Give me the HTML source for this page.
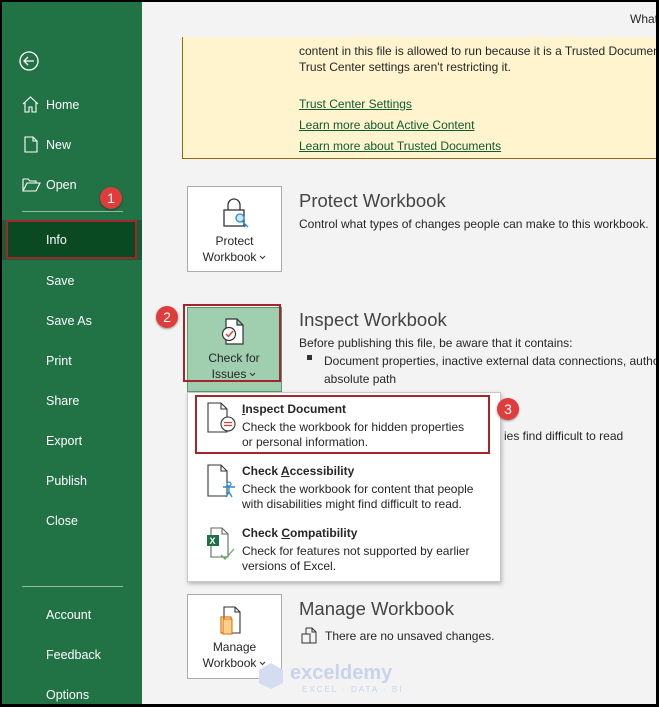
<!DOCTYPE html>
<html><head><style>
*{margin:0;padding:0;box-sizing:border-box}
body{width:659px;height:707px;background:#000;font-family:"Liberation Sans",sans-serif;position:relative;overflow:hidden}
.frame{position:absolute;left:2px;top:2px;width:654px;height:702px;background:#f3f3f3;overflow:hidden}
.side{position:absolute;left:0;top:0;width:140px;height:702px;background:#217346}
.t{position:absolute;font-size:12.5px;color:#fff;white-space:nowrap}
.a{position:absolute;white-space:nowrap;font-size:12px;color:#262626}
.h{position:absolute;font-size:18.5px;color:#444;white-space:nowrap}
.box{position:absolute;background:#fff;border:1px solid #ababab;text-align:center;font-size:12px;color:#262626;line-height:16px}
.lnk{color:#0e5c2f;text-decoration:underline}
.badge{position:absolute;width:22px;height:22px;border-radius:50%;background:#e03c3c;color:#fff;font-size:14px;text-align:center;line-height:22px;box-shadow:0 1px 2px rgba(0,0,0,.4)}
.cv{display:inline-block;width:7px;height:5px;margin-left:3px;vertical-align:middle}
</style></head><body>
<div class="frame">
<div class="side">
 <svg style="position:absolute;left:17px;top:49px" width="20" height="20" viewBox="0 0 20 20"><circle cx="10" cy="10" r="9" fill="none" stroke="#fff" stroke-width="1.3"/><path d="M15 10H5M9 6L5 10L9 14" fill="none" stroke="#fff" stroke-width="1.3"/></svg>
 <svg style="position:absolute;left:20px;top:94px" width="17" height="17" viewBox="0 0 17 17"><path d="M1 8L8.5 1L16 8M3 6V16H7V11H10V16H14V6" fill="none" stroke="#fff" stroke-width="1.1"/></svg>
 <div class="t" style="left:44px;top:96px">Home</div>
 <svg style="position:absolute;left:22px;top:134px" width="14" height="17" viewBox="0 0 14 17"><path d="M1 1H9L13 5V16H1Z M9 1V5H13" fill="none" stroke="#fff" stroke-width="1.1"/></svg>
 <div class="t" style="left:44px;top:136px">New</div>
 <svg style="position:absolute;left:20px;top:176px" width="19" height="14" viewBox="0 0 19 14"><path d="M1 1H6L8 3H14V5M1 1V13H14L18 5H5L1 13" fill="none" stroke="#fff" stroke-width="1.1"/></svg>
 <div class="t" style="left:44px;top:176px">Open</div>
 <div style="position:absolute;left:20px;top:209px;width:101px;height:1px;background:#8fbf9f"></div>
 <div style="position:absolute;left:0;top:218px;width:140px;height:40px;background:#185c37"></div>
 <div style="position:absolute;left:4px;top:218px;width:131px;height:39px;border:2px solid #a4262c;background:#0a4a22"></div>
 <div class="t" style="left:44px;top:231px">Info</div>
 <div class="t" style="left:44px;top:272px">Save</div>
 <div class="t" style="left:44px;top:312px">Save As</div>
 <div class="t" style="left:44px;top:352px">Print</div>
 <div class="t" style="left:44px;top:392px">Share</div>
 <div class="t" style="left:44px;top:432px">Export</div>
 <div class="t" style="left:44px;top:472px">Publish</div>
 <div class="t" style="left:44px;top:512px">Close</div>
 <div style="position:absolute;left:20px;top:584px;width:101px;height:1px;background:#8fbf9f"></div>
 <div class="t" style="left:44px;top:606px">Account</div>
 <div class="t" style="left:44px;top:646px">Feedback</div>
 <div class="t" style="left:44px;top:686px">Options</div>
</div>
<div class="badge" style="left:98px;top:185px">1</div>
<div class="a" style="left:628px;top:10px">What</div>
<div style="position:absolute;left:180px;top:35px;width:480px;height:122px;background:#fff4ce;border-left:1px solid #9a6a00;border-bottom:1px solid #9a6a00"></div>
<div class="a" style="left:297px;top:42px">content in this file is allowed to run because it is a Trusted Document</div>
<div class="a" style="left:297px;top:58px">Trust Center settings aren't restricting it.</div>
<div class="a lnk" style="left:297px;top:95px">Trust Center Settings</div>
<div class="a lnk" style="left:297px;top:116px">Learn more about Active Content</div>
<div class="a lnk" style="left:297px;top:137px">Learn more about Trusted Documents</div>

<div class="box" style="left:185px;top:184px;width:95px;height:86px;padding-top:46px">Protect<br>Workbook<svg class="cv" viewBox="0 0 7 5"><path d="M1 1l2.5 2.5L6 1" fill="none" stroke="#333"/></svg></div>
<svg style="position:absolute;left:221px;top:196px" width="30" height="34" viewBox="0 0 30 34"><path d="M5 12V7a6 6 0 0 1 12 0v5" fill="none" stroke="#333" stroke-width="1.3"/><rect x="1" y="12" width="20" height="16" fill="#fff" stroke="#333" stroke-width="1.3"/><circle cx="17" cy="20" r="4" fill="#cde6f7" stroke="#2a8ad4" stroke-width="1.3"/><path d="M19 23l6 6M23 27l-2 2" stroke="#2a8ad4" stroke-width="1.3"/></svg>
<div class="h" style="left:297px;top:188px">Protect Workbook</div>
<div class="a" style="left:297px;top:215px">Control what types of changes people can make to this workbook.</div>

<div style="position:absolute;left:185px;top:305px;width:95px;height:85px;background:#a0cfb0;border:1px solid #5a9a70"></div>
<div style="position:absolute;left:181px;top:302px;width:98px;height:78px;border:2px solid #a4262c"></div>
<svg style="position:absolute;left:216px;top:316px" width="30" height="30" viewBox="0 0 30 30"><path d="M8 1H19L25 7V26H8Z M19 1V7H25" fill="#fff" stroke="#333" stroke-width="1.2"/><circle cx="11" cy="16" r="6.5" fill="#fff" stroke="#333" stroke-width="1.2"/><path d="M8 16l2.5 2.5L15 13" fill="none" stroke="#e03c3c" stroke-width="1.4"/></svg>
<div class="a" style="left:184px;top:348px;width:96px;text-align:center;line-height:16px">Check for<br>Issues<svg class="cv" viewBox="0 0 7 5"><path d="M1 1l2.5 2.5L6 1" fill="none" stroke="#333"/></svg></div>
<div class="badge" style="left:154px;top:304px">2</div>
<div class="h" style="left:297px;top:307px">Inspect Workbook</div>
<div class="a" style="left:297px;top:334px">Before publishing this file, be aware that it contains:</div>
<div style="position:absolute;left:305px;top:353px;width:5px;height:5px;background:#333"></div>
<div class="a" style="left:322px;top:352px">Document properties, inactive external data connections, autho</div>
<div class="a" style="left:322px;top:370px">absolute path</div>
<div class="a" style="left:502px;top:427px">ies find difficult to read</div>

<div style="position:absolute;left:185px;top:390px;width:314px;height:190px;background:#fff;border:1px solid #c8c8c8;box-shadow:1px 2px 4px rgba(0,0,0,.25)"></div>
<div style="position:absolute;left:193px;top:393px;width:295px;height:59px;border:2px solid #a4262c"></div>
<div class="badge" style="left:495px;top:396px">3</div>
<svg style="position:absolute;left:205px;top:400px" width="32" height="34" viewBox="0 0 32 34"><path d="M1 1H14L20 7V30H1Z M14 1V7H20" fill="#fff" stroke="#333" stroke-width="1.1"/><circle cx="21" cy="22" r="7" fill="#fff" stroke="#333" stroke-width="1.1"/><path d="M17 20.5H25M17 23.5H25" stroke="#e03c3c" stroke-width="1.3"/></svg>
<div class="a" style="left:240px;top:400px;font-weight:bold"><u>I</u>nspect Document</div>
<div class="a" style="left:240px;top:418px">Check the workbook for hidden properties</div>
<div class="a" style="left:240px;top:433px">or personal information.</div>
<svg style="position:absolute;left:205px;top:462px" width="32" height="36" viewBox="0 0 32 36"><path d="M1 1H14L20 7V32H1Z M14 1V7H20" fill="#fff" stroke="#333" stroke-width="1.1"/><circle cx="22" cy="20" r="2" fill="none" stroke="#2a8ad4" stroke-width="1.2"/><path d="M16 23h12M22 23v5M19 33l3-5 3 5" fill="none" stroke="#2a8ad4" stroke-width="1.4"/></svg>
<div class="a" style="left:240px;top:462px;font-weight:bold">Check <u>A</u>ccessibility</div>
<div class="a" style="left:240px;top:480px">Check the workbook for content that people</div>
<div class="a" style="left:240px;top:495px">with disabilities might find difficult to read.</div>
<svg style="position:absolute;left:203px;top:525px" width="34" height="34" viewBox="0 0 34 34"><path d="M6 1H17L23 7V30H6Z M17 1V7H23" fill="#fff" stroke="#666" stroke-width="1.1"/><rect x="2" y="8" width="12" height="11" fill="#1e7145"/><text x="4.5" y="17" font-size="9" fill="#fff" font-family="Liberation Sans" font-weight="bold">X</text><path d="M16 28l4 4 9-10" fill="none" stroke="#5bb35b" stroke-width="1.3"/></svg>
<div class="a" style="left:240px;top:524px;font-weight:bold">Check <u>C</u>ompatibility</div>
<div class="a" style="left:240px;top:542px">Check for features not supported by earlier</div>
<div class="a" style="left:240px;top:557px">versions of Excel.</div>

<div class="box" style="left:185px;top:592px;width:95px;height:85px;padding-top:44px">Manage<br>Workbook<svg class="cv" viewBox="0 0 7 5"><path d="M1 1l2.5 2.5L6 1" fill="none" stroke="#333"/></svg></div>
<svg style="position:absolute;left:218px;top:604px" width="28" height="32" viewBox="0 0 28 32"><path d="M4 1H15L20 6V27H4Z M15 1V6H20" fill="#fff" stroke="#333" stroke-width="1.1"/><rect x="1" y="11" width="10" height="16" fill="none" stroke="#e06c00" stroke-width="1.2"/><rect x="3" y="13" width="9" height="15" fill="#f8d08a" stroke="#e06c00" stroke-width="1"/></svg>
<div class="h" style="left:297px;top:596px">Manage Workbook</div>
<svg style="position:absolute;left:299px;top:625px" width="16" height="17" viewBox="0 0 16 17"><path d="M5 1H11L15 5V16H9 M11 1V5H15 M5 1V7 M1 7H9V16H1Z" fill="none" stroke="#333" stroke-width="1"/></svg>
<div class="a" style="left:323px;top:627px">There are no unsaved changes.</div>
<svg style="position:absolute;left:256px;top:660px" width="26" height="28" viewBox="0 0 26 28"><path d="M13 1L25 8V21L13 27L1 21V8Z" fill="#d6dcef"/></svg>
<div style="position:absolute;left:288px;top:660px;font-size:20px;font-weight:bold;color:#c9d3ea">exceldemy</div>
<div style="position:absolute;left:300px;top:683px;font-size:8px;letter-spacing:2px;color:#c9d3ea">EXCEL · DATA · BI</div>
</div>
</body></html>
